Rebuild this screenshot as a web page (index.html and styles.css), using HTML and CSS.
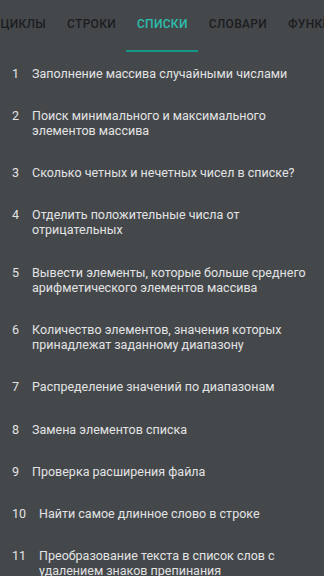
FILE: index.html
```html
<!DOCTYPE html>
<html lang="ru">
<head>
  <meta charset="UTF-8" />
  <meta name="viewport" content="width=device-width, initial-scale=1.0" />
  <title>Списки</title>
  <link rel="stylesheet" href="styles.css">
</head>
<body>
  <div class="tabbar">
    <div class="tabs">
      <div class="tab">Циклы</div>
      <div class="tab">Строки</div>
      <div class="tab active">Списки</div>
      <div class="tab">Словари</div>
      <div class="tab">Функции</div>
    </div>
  </div>

  <ul class="tasks">
    <li><span class="num">1</span><span class="text">Заполнение массива случайными числами</span></li>
    <li><span class="num">2</span><span class="text">Поиск минимального и максимального элементов массива</span></li>
    <li><span class="num">3</span><span class="text">Сколько четных и нечетных чисел в списке?</span></li>
    <li><span class="num">4</span><span class="text">Отделить положительные числа от отрицательных</span></li>
    <li><span class="num">5</span><span class="text">Вывести элементы, которые больше среднего арифметического элементов массива</span></li>
    <li><span class="num">6</span><span class="text">Количество элементов, значения которых принадлежат заданному диапазону</span></li>
    <li><span class="num">7</span><span class="text">Распределение значений по диапазонам</span></li>
    <li><span class="num">8</span><span class="text">Замена элементов списка</span></li>
    <li><span class="num">9</span><span class="text">Проверка расширения файла</span></li>
    <li><span class="num">10</span><span class="text">Найти самое длинное слово в строке</span></li>
    <li><span class="num">11</span><span class="text">Преобразование текста в список слов с удалением знаков препинания</span></li>
  </ul>
</body>
</html>
```

FILE: styles.css
```css
html, body {
  margin: 0;
  padding: 0;
}
body {
  width: 324px;
  height: 576px;
  overflow: hidden;
  background: #45484b;
  font-family: Roboto, "Noto Sans", sans-serif;
  color: #e2e3e4;
}
.tabbar {
  height: 52px;
  overflow: hidden;
}
.tabs {
  display: flex;
  margin-left: -10px;
  height: 52px;
}
.tab {
  flex: none;
  padding: 0 10.5px;
  height: 50px;
  line-height: 48px;
  font-size: 12px;
  font-weight: 500;
  letter-spacing: 0.3px;
  text-transform: uppercase;
  color: #1b1d1f;
  border-bottom: 2px solid transparent;
}
.tab.active {
  color: #2cbfae;
  border-bottom-color: #16958b;
}
.tasks {
  list-style: none;
  margin: 0;
  padding: 0;
}
.tasks li {
  display: flex;
  gap: 13px;
  padding: 13.65px 12px;
  font-size: 12.5px;
  line-height: 15px;
}
.num {
  flex: none;
}
.text {
  flex: 1;
}
```
